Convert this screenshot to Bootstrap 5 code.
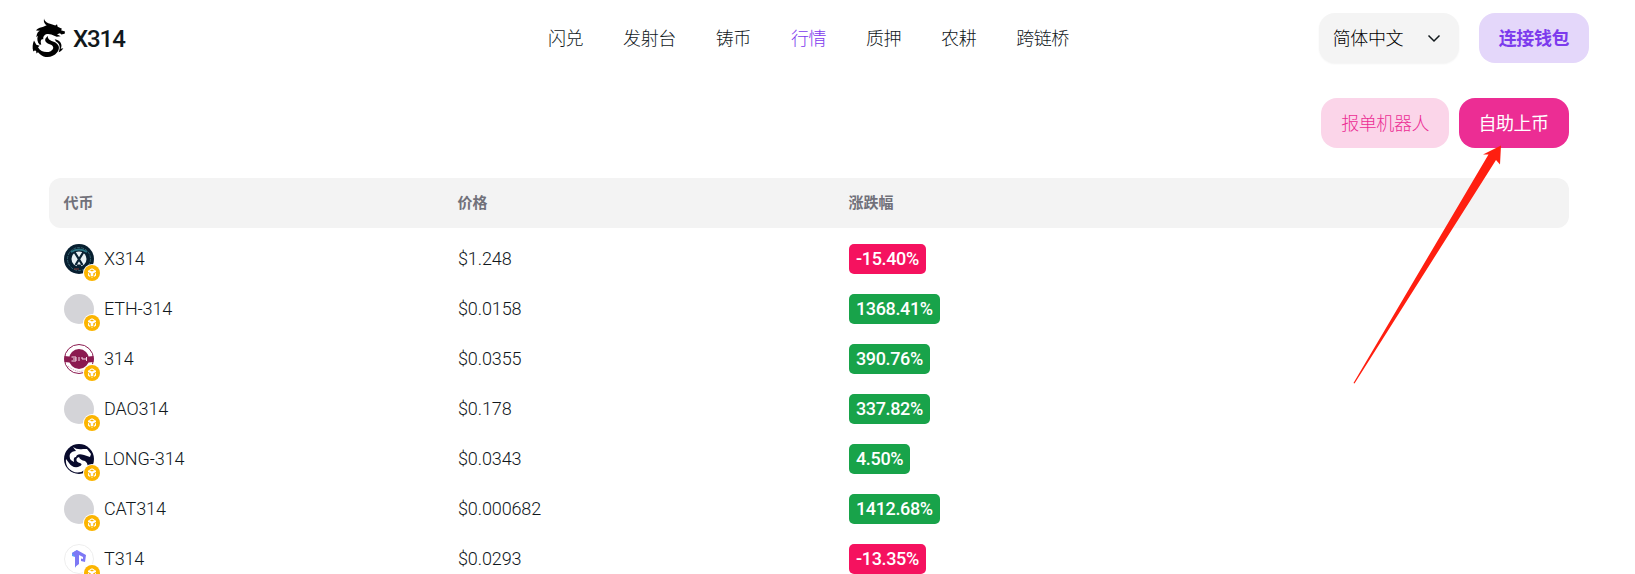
<!DOCTYPE html>
<html lang="zh-CN">
<head>
<meta charset="utf-8">
<meta name="viewport" content="width=device-width, initial-scale=1">
<title>X314</title>
<link href="https://cdn.jsdelivr.net/npm/bootstrap@5.3.0/dist/css/bootstrap.min.css" rel="stylesheet">
<style>
body{font-family:Roboto,"Noto Sans CJK SC",sans-serif;font-size:18px;font-weight:300;letter-spacing:-.45px;color:#11181c;height:574px;overflow:hidden;background:#fff}
.topbar{height:76px;padding:0 46px 0 32px}
.brandbox{width:516px}
.brandname{font-size:24px;font-weight:500;letter-spacing:-1.1px;line-height:32px;margin-left:7px;padding-top:1px}
.menu{gap:40px;padding-top:1px}
.menu a{color:#11181c;text-decoration:none;white-space:nowrap}
.menu a.on{color:#7c3aed}
.tools{gap:20px}
.pill{height:50px;border-radius:16px;border:0;padding:0 20px;letter-spacing:-.45px;font-size:18px;font-weight:300;white-space:nowrap}
.lang{width:140px;background:#f4f4f4;color:#000;padding:0 18px 0 14px;box-shadow:0 1px 2px rgba(0,0,0,.05)}
.wallet{background:#e4d7fa;color:#7c3aed;font-weight:700}
.robot{background:#fbd5e9;color:#ec2d94}
.listing{background:#ec2d94;color:#fff;font-weight:400;padding-left:19px;width:110px}
.actions{padding:22px 66px 0 0;gap:10px}
.market{margin:30px 66px 0 49px}
.grid3{display:grid;grid-template-columns:394px 391px 1fr;padding-left:15px;height:50px;align-items:center}
.thead3{background:#f3f3f3;border-radius:12px;font-size:15px;font-weight:700;letter-spacing:0;color:#71717a}
.thead3>div{margin-left:-.5px}
.coins{padding-top:6px;letter-spacing:-.12px}
.quote,.coin{padding-bottom:1px}
.avatar{width:30px;height:30px;position:relative;margin-right:10px}
.avatar>svg{display:block}
.chain{position:absolute;left:19px;top:20px}
.rate{display:block;width:max-content;height:30px;line-height:30px;border-radius:5px;padding:0 7px;color:#fff;font-weight:500;letter-spacing:-.36px}
.up{background:#18a34a}.down{background:#f5125f}
.pointer{position:absolute;left:1350px;top:140px;pointer-events:none}
</style>
</head>
<body>
<svg width="0" height="0" class="position-absolute"><defs>
<symbol id="dragon" viewBox="36 24 102 122"><path d="M72 25C74 35 84 39 90 41L106 46 111 42 113 50 126 56 123 60 135 64 134 71 124 73 120 69 111 72 122 78 110 80 94 73C80 68 68 74 70 87C63 86 60 92 64 103L59 104C52 96 50 86 54 77L49 81C50 70 54 64 60 62L48 61C55 52 64 53 70 50L80 45C74 42 70 36 72 25Z"/><path d="M84 77C81 86 90 91 101 95C117 101 122 115 111 127C99 142 76 146 60 132L54 126 49 130C50 122 46 118 40 124C36 112 38 100 42 91L49 104 59 107 54 111C62 125 79 129 92 123C103 117 102 107 91 103C80 99 72 93 77 84Z"/><path d="M104 87C121 90 129 103 122 116L130 114C126 121 120 125 116 126C123 111 118 99 108 94Z"/></symbol>
<symbol id="bnb" viewBox="0 0 18 18"><circle cx="9" cy="9" r="9" fill="#fff"/><circle cx="9" cy="9" r="8" fill="#fcb500"/><path d="m9 4.300 2.600 1.400-1 .6L9 5.500l-1.600.8-1-.6ZM5 6.700l1.300-.6L9 7.500l2.700-1.400 1.300.6v1.200L10.300 9.300v2.500L9 12.500l-1.300-.7V9.300L5 7.900ZM5 9l1.100.6v1.500l1.100.7v1.200L5 11.800ZM13 9l-1.100.6v1.500l-1.100.7v1.200l2.200-1.200ZM9 13.200l.9.400-.9.500-.9-.5Z" fill="#fff"/></symbol>
</defs></svg>

<header class="topbar d-flex align-items-center">
  <div class="brandbox d-flex align-items-center">
    <svg width="34" height="41"><use href="#dragon"/></svg>
    <span class="brandname">X314</span>
  </div>
  <nav class="menu d-flex">
    <a href="#">闪兑</a><a href="#">发射台</a><a href="#">铸币</a><a href="#" class="on">行情</a><a href="#">质押</a><a href="#">农耕</a><a href="#">跨链桥</a>
  </nav>
  <div class="tools d-flex ms-auto">
    <button class="pill lang d-flex align-items-center justify-content-between">简体中文
      <svg width="14" height="14" viewBox="0 0 14 14" fill="none" stroke="#11181c" stroke-width="1.5"><path d="M1.5 4.5 7 10l5.500-5.500"/></svg>
    </button>
    <button class="pill wallet">连接钱包</button>
  </div>
</header>

<main>
  <div class="actions d-flex justify-content-end">
    <button class="pill robot">报单机器人</button>
    <button class="pill listing">自助上币</button>
  </div>
  <section class="market">
    <div class="grid3 thead3"><div>代币</div><div>价格</div><div>涨跌幅</div></div>
    <div class="coins">
      <div class="grid3"><div class="d-flex align-items-center"><div class="avatar">
        <svg width="30" height="30"><circle cx="15" cy="15" r="15" fill="#071f30"/><circle cx="15" cy="15" r="11.500" fill="none" stroke="#34606d" stroke-dasharray="3 1"/><path d="M7 8q8-5 16 0" stroke="#2a7483" stroke-width="2" fill="none"/><path d="M10 25h5" stroke="#8a3b35"/><circle cx="15" cy="15" r="7.500" fill="#e9f1f4"/><path d="m10.500 8 8 13M19.500 8l-8 13" stroke="#0a2233" stroke-width="2.200"/><path d="M13 22h4" stroke="#0a2233" stroke-width="3"/></svg>
        <svg class="chain" width="18" height="18"><use href="#bnb"/></svg></div><span class="coin">X314</span></div><div class="quote">$1.248</div><div><span class="rate down">-15.40%</span></div></div>
      <div class="grid3"><div class="d-flex align-items-center"><div class="avatar">
        <svg width="30" height="30"><circle cx="15" cy="15" r="15" fill="#d4d4d8"/></svg>
        <svg class="chain" width="18" height="18"><use href="#bnb"/></svg></div><span class="coin">ETH-314</span></div><div class="quote">$0.0158</div><div><span class="rate up">1368.41%</span></div></div>
      <div class="grid3"><div class="d-flex align-items-center"><div class="avatar">
        <svg width="30" height="30"><circle cx="15" cy="15" r="14.500" fill="#fff" stroke="#8b1a50"/><circle cx="15" cy="15" r="10" fill="#8b1a50"/><path d="M.5 12Q15 14 29.500 12v6Q15 20 .5 18Z" fill="#8b1a50"/><path d="M7.500 13H12v4H7.500M9 15h3M15 13v4M18 13v2h4.500M22.500 13v4" fill="none" stroke="#f4dbe7"/><path d="M4 22q11 9 18 3" fill="none" stroke="#c68ca9" stroke-dasharray="1 1"/></svg>
        <svg class="chain" width="18" height="18"><use href="#bnb"/></svg></div><span class="coin">314</span></div><div class="quote">$0.0355</div><div><span class="rate up">390.76%</span></div></div>
      <div class="grid3"><div class="d-flex align-items-center"><div class="avatar">
        <svg width="30" height="30"><circle cx="15" cy="15" r="15" fill="#d4d4d8"/></svg>
        <svg class="chain" width="18" height="18"><use href="#bnb"/></svg></div><span class="coin">DAO314</span></div><div class="quote">$0.178</div><div><span class="rate up">337.82%</span></div></div>
      <div class="grid3"><div class="d-flex align-items-center"><div class="avatar">
        <svg width="30" height="30"><circle cx="15" cy="15" r="15" fill="#080a2c"/><path d="M9 3Q13 6 19 5L23 5 27 10 26 13 20 11Q13 9 12 13Q9 13 10 18Q4 15 6 10Q8 7 12 7Z" fill="#fff"/><path d="M15 13Q16 16 21 17Q26 21 22 25Q15 31 8 27Q1 23 2 15L5 19Q8 24 14 23Q20 21 16 19Q11 18 13 14Z" fill="#fff"/></svg>
        <svg class="chain" width="18" height="18"><use href="#bnb"/></svg></div><span class="coin">LONG-314</span></div><div class="quote">$0.0343</div><div><span class="rate up">4.50%</span></div></div>
      <div class="grid3"><div class="d-flex align-items-center"><div class="avatar">
        <svg width="30" height="30"><circle cx="15" cy="15" r="15" fill="#d4d4d8"/></svg>
        <svg class="chain" width="18" height="18"><use href="#bnb"/></svg></div><span class="coin">CAT314</span></div><div class="quote">$0.000682</div><div><span class="rate up">1412.68%</span></div></div>
      <div class="grid3"><div class="d-flex align-items-center"><div class="avatar">
        <svg width="30" height="30"><circle cx="15" cy="15" r="14.500" fill="#fff" stroke="#eee"/><path d="m8 9 5-3-1 16-1 2V13l-3-1Z" fill="#5ea0f8"/><path d="m8 9 5-3 9 5-1 7-4-1v-2.500l2 .5v-2l-4-2v9l-4 3V12Z" fill="#7d78f5"/></svg>
        <svg class="chain" width="18" height="18"><use href="#bnb"/></svg></div><span class="coin">T314</span></div><div class="quote">$0.0293</div><div><span class="rate down">-13.35%</span></div></div>
    </div>
  </section>
</main>
<svg class="pointer" width="160" height="250"><path d="M151 5.500 133 14.500 138.500 14.500 3.500 243 4.500 243.500 146 20 150 24.500Z" fill="#ff1f10"/></svg>
<script src="https://cdn.jsdelivr.net/npm/bootstrap@5.3.0/dist/js/bootstrap.bundle.min.js"></script>
</body>
</html>
